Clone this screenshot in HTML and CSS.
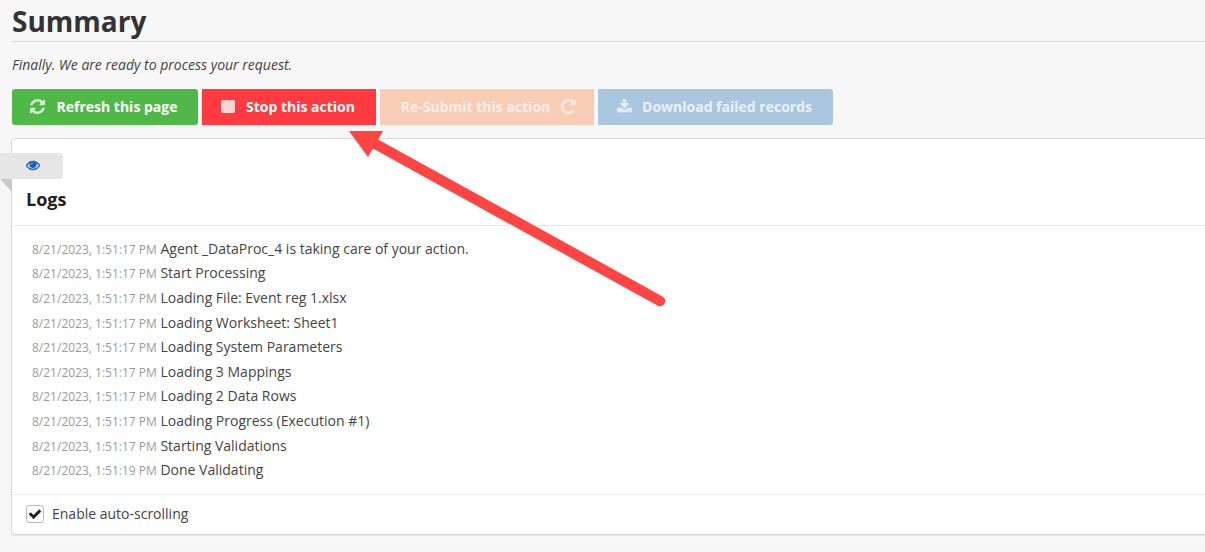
FILE: index.html
```html
<!DOCTYPE html>
<html lang="en">
<head>
<meta charset="utf-8">
<title>Summary</title>
<link rel="stylesheet" href="styles.css">
</head>
<body>
<main class="page">
  <h1 class="title">Summary</h1>
  <p class="lead">Finally. We are ready to process your request.</p>
  <div class="actions">
    <button class="btn btn-green" type="button">
      <svg class="ico" viewBox="128 128 1536 1536"><path d="M1639 1056q0 5-1 7-64 268-268 434.5t-478 166.5q-146 0-282.5-55t-243.5-157l-129 129q-19 19-45 19t-45-19-19-45v-448q0-26 19-45t45-19h448q26 0 45 19t19 45-19 45l-137 137q71 66 161 102t187 36q134 0 250-65t186-179q11-17 53-117 8-23 30-23h192q13 0 22.5 9.5t9.5 22.5zm25-800v448q0 26-19 45t-45 19h-448q-26 0-45-19t-19-45 19-45l138-138q-148-137-349-137-134 0-250 65t-186 179q-11 17-53 117-8 23-30 23h-199q-13 0-22.5-9.5t-9.5-22.5v-7q65-268 270-434.5t480-166.5q146 0 284 55.5t245 156.5l130-129q19-19 45-19t45 19 19 45z"/></svg>
      Refresh this page
    </button>
    <button class="btn btn-red" type="button">
      <span class="stop"></span>
      Stop this action
    </button>
    <button class="btn btn-orange" type="button">
      Re-Submit this action
      <svg class="ico" viewBox="128 128 1536 1536"><path d="M1664 256v448q0 26-19 45t-45 19h-448q-42 0-59-40-17-39 14-69l138-138q-148-137-349-137-104 0-198.5 40.5t-163.5 109.5-109.5 163.5-40.5 198.5 40.5 198.5 109.5 163.5 163.5 109.5 198.5 40.5q119 0 225-52t179-147q7-10 23-12 15 0 25 9l137 138q9 8 9.5 20.5t-7.5 22.5q-109 132-264 204.5t-327 72.5q-156 0-298-61t-245-164-164-245-61-298 61-298 164-245 245-164 298-61q147 0 284.5 55.5t244.5 156.5l130-129q29-31 70-14 39 17 39 59z"/></svg>
    </button>
    <button class="btn btn-blue" type="button">
      <svg class="ico" viewBox="64 64 1664 1664"><path d="M1344 1344q0-26-19-45t-45-19-45 19-19 45 19 45 45 19 45-19 19-45zm256 0q0-26-19-45t-45-19-45 19-19 45 19 45 45 19 45-19 19-45zm128-224v320q0 40-28 68t-68 28h-1472q-40 0-68-28t-28-68v-320q0-40 28-68t68-28h465l135 136q58 56 136 56t136-56l136-136h464q40 0 68 28t28 68zm-325-569q17 41-14 70l-448 448q-18 19-45 19t-45-19l-448-448q-31-29-14-70 17-39 59-39h256v-448q0-26 19-45t45-19h256q26 0 45 19t19 45v448h256q42 0 59 39z"/></svg>
      Download failed records
    </button>
  </div>
  <section class="panel">
    <div class="tab">
      <svg class="eye" viewBox="0 256 1792 1408"><path d="M1664 960q-152-236-381-353 61 104 61 225 0 185-131.5 316.5t-316.5 131.5-316.5-131.5-131.5-316.5q0-121 61-225-229 117-381 353 133 205 333.5 326.5t434.5 121.5 434.5-121.5 333.5-326.5zm-720-384q0-20-14-34t-34-14q-125 0-214.5 89.5t-89.5 214.5q0 20 14 34t34 14 34-14 14-34q0-86 61-147t147-61q20 0 34-14t14-34zm848 384q0 34-20 69-140 230-376.5 368.5t-499.5 138.5-499.5-139-376.5-368q-20-35-20-69t20-69q140-229 376.5-368t499.5-139 499.5 139 376.5 368q20 35 20 69z"/></svg>
    </div>
    <h2 class="panel-title">Logs</h2>
    <ul class="logs">
      <li><time>8/21/2023, 1:51:17 PM</time> Agent _DataProc_4 is taking care of your action.</li>
      <li><time>8/21/2023, 1:51:17 PM</time> Start Processing</li>
      <li><time>8/21/2023, 1:51:17 PM</time> Loading File: Event reg 1.xlsx</li>
      <li><time>8/21/2023, 1:51:17 PM</time> Loading Worksheet: Sheet1</li>
      <li><time>8/21/2023, 1:51:17 PM</time> Loading System Parameters</li>
      <li><time>8/21/2023, 1:51:17 PM</time> Loading 3 Mappings</li>
      <li><time>8/21/2023, 1:51:17 PM</time> Loading 2 Data Rows</li>
      <li><time>8/21/2023, 1:51:17 PM</time> Loading Progress (Execution #1)</li>
      <li><time>8/21/2023, 1:51:17 PM</time> Starting Validations</li>
      <li><time>8/21/2023, 1:51:19 PM</time> Done Validating</li>
    </ul>
    <div class="panel-foot">
      <span class="check">
        <svg viewBox="0 0 1792 1792"><path d="M1671 566q0 40-28 68l-724 724-136 136q-28 28-68 28t-68-28l-136-136-362-362q-28-28-28-68t28-68l136-136q28-28 68-28t68 28l294 295 656-657q28-28 68-28t68 28l136 136q28 28 28 68z"/></svg>
      </span>
      <span>Enable auto-scrolling</span>
    </div>
  </section>
</main>
<svg class="arrow" viewBox="0 0 1205 552" aria-hidden="true">
  <line x1="660" y1="301" x2="372" y2="142"/>
  <polygon points="349,131 383,131 368,157"/>
</svg>
</body>
</html>
```

FILE: styles.css
```css
* { box-sizing: border-box; }
html, body { margin: 0; height: 552px; overflow: hidden; }
body {
  background: #f7f7f7;
  color: #3f4450;
  font-family: "Open Sans", "Liberation Sans", sans-serif;
  font-size: 14px;
}
.page { padding: 0 0 0 12px; }
.title {
  margin: 0;
  height: 42px;
  font-size: 28px;
  line-height: 42px;
  font-weight: 700;
  color: #333;
  border-bottom: 1px solid #d9d9d9;
}
.lead {
  margin: 0;
  padding-top: 13px;
  height: 47px;
  font-style: italic;
  line-height: 20px;
  font-size: 14px;
  color: #444;
}
.actions { display: flex; gap: 4px; }
.btn {
  display: flex;
  align-items: center;
  justify-content: center;
  height: 36px;
  padding: 0 2px 2px 0;
  border: 0;
  color: #fff;
  font-family: inherit;
  font-size: 14px;
  font-weight: 700;
  white-space: nowrap;
}
.ico { width: 15px; height: 15px; fill: currentColor; opacity: .75; }
.btn-green { width: 186px; background: #50b848; border-radius: 3px; gap: 11px; }
.btn-red { width: 174px; background: #ff3a41; gap: 11px; }
.btn-orange { width: 214px; background: #f7cdb6; color: #fbeee6; gap: 11px; padding-left: 3px; padding-right: 0; }
.btn-orange .ico { opacity: .9; }
.btn-blue { width: 235px; background: #abc7e0; border-radius: 0 3px 3px 0; color: #eaf1f7; gap: 10px; }
.btn-blue .ico { opacity: .9; }
.stop { width: 14px; height: 13px; background: #ffd4d6; border-radius: 2px; }
.panel {
  position: relative;
  margin: 13px -12px 0 -1px;
  height: 397px;
  background: #fff;
  border: 1px solid #d8d8d8;
  border-radius: 4px 0 0 4px;
  box-shadow: 0 1px 1px rgba(0, 0, 0, .08);
}
.tab {
  position: absolute;
  left: -12px;
  top: 14px;
  width: 63px;
  height: 26px;
  padding-bottom: 2px;
  display: flex;
  align-items: center;
  background: #e6e6e6;
  border-radius: 0 4px 4px 0;
}
.tab::after {
  content: "";
  position: absolute;
  left: 0;
  top: 26px;
  border-top: 13px solid #c9c9c9;
  border-left: 12px solid transparent;
}
.eye { width: 14px; height: 11px; margin-left: 26px; fill: #1b62b5; stroke: #1b62b5; stroke-width: 60; }
.panel-title {
  margin: 0;
  height: 87px;
  padding: 46px 14px 0;
  border-bottom: 1px solid #e8e8e8;
  color: #222;
  font-size: 18px;
  line-height: 28px;
  font-weight: 700;
}
.logs {
  list-style: none;
  margin: 0;
  height: 268px;
  padding: 10.8px 20px 0;
  color: #444;
}
.logs li { height: 24.6px; line-height: 24.6px; white-space: nowrap; }
.logs time { font-size: 12px; color: #9b9b9b; }
.panel-foot {
  display: flex;
  align-items: center;
  gap: 8px;
  height: 38px;
  padding-left: 14px;
  border-top: 1px solid #ececec;
  color: #444;
}
.check {
  display: flex;
  align-items: center;
  justify-content: center;
  width: 18px;
  height: 18px;
  background: #fff;
  border: 1px solid #bbb;
  border-radius: 3px;
}
.check svg { width: 14px; height: 14px; fill: #222; }
.arrow { position: absolute; left: 0; top: 0; width: 1205px; height: 552px; pointer-events: none; }
.arrow line { stroke: #ff4444; stroke-width: 10.5; stroke-linecap: round; }
.arrow polygon { fill: #ff4444; }
```
